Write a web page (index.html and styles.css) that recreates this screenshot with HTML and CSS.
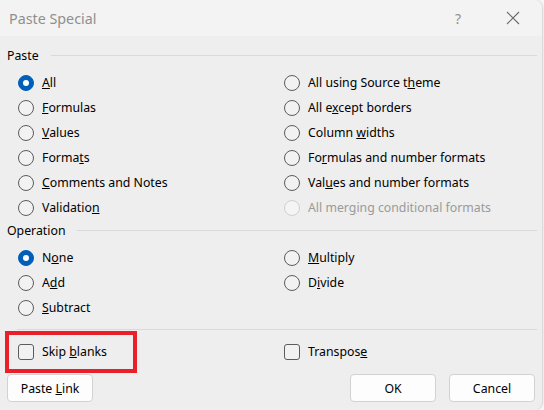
FILE: index.html
```html
<!DOCTYPE html>
<html>
<head>
<meta charset="utf-8">
<link rel="stylesheet" href="styles.css">
</head>
<body>
<div class="dialog">
  <div class="titlebar">
    <span class="title">Paste Special</span>
    <span class="help">?</span>
    <span class="close">
      <svg width="14" height="14" viewBox="0 0 14 14"><path d="M1 1 L13 13 M13 1 L1 13" stroke="#6b6b6b" stroke-width="1.1" fill="none"/></svg>
    </span>
  </div>
  <div class="content">
    <div class="group-head first"><span class="group-label">Paste</span><span class="rule"></span></div>
    <div class="options paste">
      <div class="opt"><span class="radio checked"></span><span><u>A</u>ll</span></div>
      <div class="opt"><span class="radio"></span><span>All using Source t<u>h</u>eme</span></div>
      <div class="opt"><span class="radio"></span><span><u>F</u>ormulas</span></div>
      <div class="opt"><span class="radio"></span><span>All e<u>x</u>cept borders</span></div>
      <div class="opt"><span class="radio"></span><span><u>V</u>alues</span></div>
      <div class="opt"><span class="radio"></span><span>Column <u>w</u>idths</span></div>
      <div class="opt"><span class="radio"></span><span>Forma<u>t</u>s</span></div>
      <div class="opt"><span class="radio"></span><span>Fo<u>r</u>mulas and number formats</span></div>
      <div class="opt"><span class="radio"></span><span><u>C</u>omments and Notes</span></div>
      <div class="opt"><span class="radio"></span><span>Val<u>u</u>es and number formats</span></div>
      <div class="opt"><span class="radio"></span><span>Validatio<u>n</u></span></div>
      <div class="opt disabled"><span class="radio"></span><span>All mer<u>g</u>ing conditional formats</span></div>
    </div>
    <div class="group-head"><span class="group-label">Operation</span><span class="rule"></span></div>
    <div class="options operation">
      <div class="opt"><span class="radio checked"></span><span>N<u>o</u>ne</span></div>
      <div class="opt"><span class="radio"></span><span><u>M</u>ultiply</span></div>
      <div class="opt"><span class="radio"></span><span>A<u>d</u>d</span></div>
      <div class="opt"><span class="radio"></span><span>D<u>i</u>vide</span></div>
      <div class="opt"><span class="radio"></span><span><u>S</u>ubtract</span></div>
    </div>
    <div class="separator"></div>
    <div class="options checks">
      <div class="opt skip"><span class="check"></span><span>Skip <u>b</u>lanks</span><span class="highlight"></span></div>
      <div class="opt"><span class="check"></span><span>Transpos<u>e</u></span></div>
    </div>
    <div class="buttons">
      <button class="btn">Paste <u>L</u>ink</button>
      <span class="spacer"></span>
      <button class="btn">OK</button>
      <button class="btn">Cancel</button>
    </div>
  </div>
</div>
</body>
</html>
```
FILE: styles.css
```css
html, body {
  margin: 0;
  padding: 0;
  background: #f7f7f7;
}
body {
  font-family: "Noto Sans", "Open Sans", sans-serif;
  font-size: 12.3px;
  color: #000;
}
.dialog {
  width: 542px;
  height: 410px;
  background: #eeeeee;
  border-radius: 0 8px 8px 0;
  box-shadow: 1px 0 2px rgba(0,0,0,0.15);
  overflow: hidden;
  position: relative;
}
.titlebar {
  height: 36px;
  background: #f3f3f3;
  display: flex;
  align-items: center;
  padding-left: 9px;
}
.title {
  font-size: 14.3px;
  color: #8f8f8f;
  flex: 1;
}
.help {
  color: #8f8f8f;
  font-size: 14px;
  width: 16px;
  margin-right: 35px;
}
.close {
  display: flex;
  margin-right: 22px;
}
.content {
  padding: 0 5px 0 7px;
}
.group-head {
  display: flex;
  align-items: center;
  height: 20px;
  margin-bottom: 5px;
}
.group-head.first {
  margin-top: 9px;
}
.group-label {
  margin-right: 12px;
}
.rule {
  flex: 1;
  height: 1px;
  background: #d9d9d9;
}
.options {
  display: grid;
  grid-template-columns: 266px 1fr;
  padding-left: 11px;
}
.opt {
  display: flex;
  align-items: center;
  height: 25px;
  gap: 8px;
  position: relative;
}
.opt.disabled {
  color: #9a9a9a;
}
.radio {
  width: 14px;
  height: 14px;
  border: 1px solid #5c5c5c;
  border-radius: 50%;
  background: #f2f2f2;
  box-sizing: content-box;
  flex: none;
}
.disabled .radio {
  border-color: #cfcfcf;
  background: #f4f4f4;
}
.radio.checked {
  border-color: #005fb8;
  background: #005fb8;
  position: relative;
}
.radio.checked::after {
  content: "";
  position: absolute;
  left: 4px;
  top: 4px;
  width: 6px;
  height: 6px;
  border-radius: 50%;
  background: #fff;
}
.separator {
  height: 1px;
  background: #d9d9d9;
  margin: 9px 0 0 10px;
}
.checks {
  margin-top: 9px;
}
.check {
  width: 14px;
  height: 14px;
  border: 1px solid #5c5c5c;
  border-radius: 3px;
  background: #f2f2f2;
  flex: none;
}
.highlight {
  position: absolute;
  left: -13px;
  top: -8px;
  width: 124px;
  height: 34px;
  border: 4px solid #e8202a;
}
.buttons {
  display: flex;
  gap: 13px;
  margin-top: 10px;
  padding-right: 2px;
}
.spacer {
  flex: 1;
}
.btn {
  width: 86px;
  height: 28px;
  background: #fdfdfd;
  border: 1px solid #d2d2d2;
  border-radius: 4px;
  font-family: inherit;
  font-size: 12.3px;
  color: #000;
  padding: 0;
}
```
